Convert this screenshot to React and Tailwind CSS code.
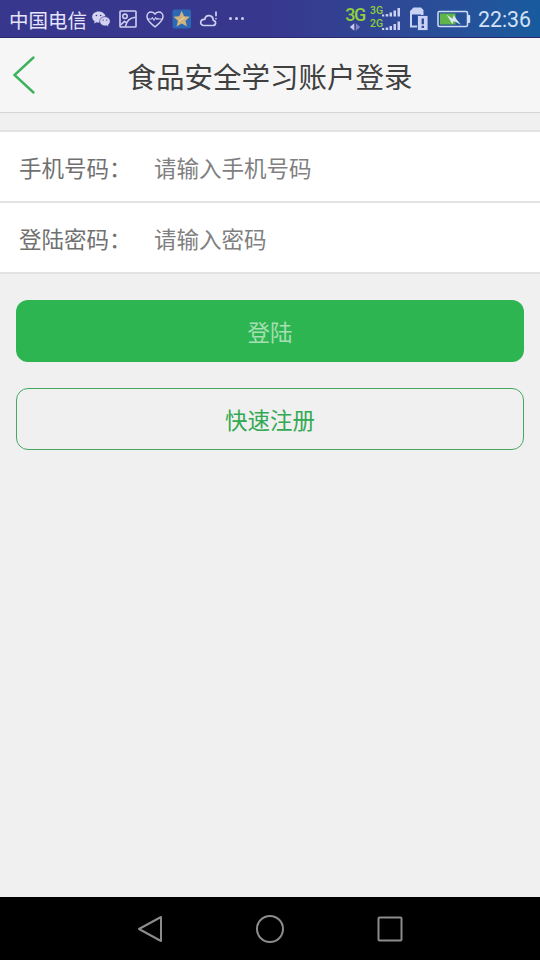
import { useState } from 'react'

const FIELDS = [
  { key: 'phone', label: '手机号码：', hint: '请输入手机号码', type: 'tel' },
  { key: 'password', label: '登陆密码：', hint: '请输入密码', type: 'password' },
]

function WechatIcon() {
  return (
    <svg className="ml-[4px] h-[18px] w-[20px] shrink-0" viewBox="0 0 20 18">
      <path d="M7.700 1.600C4 1.600 1.200 4 1.200 7c0 1.800 1 3.300 2.500 4.300L3 13.600l2.600-1.400c.7.2 1.400.3 2.100.3h1c0-3 2.200-6 6-6C13.800 3.400 10.800 1.600 7.700 1.600z" fill="#d3d2f0" />
      <path d="M19.200 11.300c0-2.500-2.300-4.600-5.200-4.600s-5.300 2.100-5.300 4.600 2.300 4.600 5.300 4.600c.6 0 1.200-.1 1.700-.2l2 1.200-.5-1.900c1.200-.8 2-2.200 2-3.700z" fill="#d3d2f0" stroke="#35358b" strokeWidth=".6" />
      <g fill="#35358b">
        <circle cx="5.400" cy="5.500" r=".8" />
        <circle cx="9.700" cy="5.500" r=".8" />
        <circle cx="12.200" cy="10.100" r=".65" />
        <circle cx="15.700" cy="10.100" r=".65" />
      </g>
    </svg>
  )
}

function PictureIcon() {
  return (
    <svg className="ml-[7.5px] h-[18px] w-[18px] shrink-0" viewBox="0 0 18 18" fill="none" stroke="#cfcff0" strokeWidth="1.6" strokeLinejoin="round">
      <rect x="1" y="1" width="16" height="16" rx=".8" />
      <circle cx="6" cy="6.300" r="2.200" />
      <path d="M1.500 15 5.500 11.300l2.300 1.500M6.500 16.500C7.500 11 11.500 7.600 16.500 7.200" />
    </svg>
  )
}

function HeartIcon() {
  return (
    <svg className="ml-[9px] h-[18px] w-[18px] shrink-0" viewBox="0 0 18 18" fill="none" stroke="#cfcff0" strokeWidth="1.5" strokeLinejoin="round" strokeLinecap="round">
      <path d="M9 16.800C5 13.600 1 10.800 1 6.500 1 3.800 2.900 2 5.200 2 6.900 2 8.300 2.900 9 4.200 9.700 2.900 11.100 2 12.800 2 15.100 2 17 3.800 17 6.500c0 4.300-4 7.100-8 10.300z" />
      <path d="M1.500 9h4l1-1.300 1.500 2.600 1.700-2.800 1.300 2 1-1.200.7.700h3.500" strokeWidth="1.100" />
    </svg>
  )
}

function StarIcon() {
  return (
    <svg className="ml-[8px] h-[20px] w-[20px] shrink-0" viewBox="0 0 20 20">
      <rect x=".5" y=".5" width="18.500" height="19" rx="2" fill="#2d68b5" />
      <path d="m9.700 1.800 2.400 5.500 5.800.5-4.400 3.900 1.400 5.900-5.200-3.100-5.200 3.100 1.400-5.900-4.400-3.900 5.800-.5z" fill="#d0b27c" />
      <path d="m7 12.400 5.500-4" stroke="#e8d9b5" strokeWidth="1" />
    </svg>
  )
}

function CloudIcon() {
  return (
    <svg className="ml-[7px] h-[18px] w-[20px] shrink-0" viewBox="0 0 20 18" fill="none" stroke="#cfcff0" strokeWidth="1.7" strokeLinecap="round" strokeLinejoin="round">
      <path d="M4.500 15.500h9.200c3.600 0 3.800-4.700.6-5C14 4.200 6.500 4 5.800 9.400 1 8.800.2 15.200 4.500 15.500z" />
      <path d="M17 2v3.600M17 8.500v.1" />
    </svg>
  )
}

function SignalIcon() {
  return (
    <svg className="ml-[5px] h-[30px] w-[32px] shrink-0" viewBox="0 0 32 30">
      <g fill="#8fcf3c" fontFamily="Roboto, sans-serif" fontWeight="500" fontSize="10.500">
        <text x="0" y="9.500">3G</text>
        <text x="0" y="23">2G</text>
      </g>
      <g fill="#c9d0f2">
        <path d="M12 10.500h2.200v2H12zM15.700 10h2.500v2.500h-2.500zM19.500 8.500H22v4h-2.500zM23.500 6.500H26v6h-2.500zM27.500 4H30v8.500h-2.500z" />
        <path d="M12 24h2.200v2H12zM15.700 23.500h2.500V26h-2.500zM19.500 22H22v4h-2.500zM23.500 20H26v6h-2.500zM27.500 17.500H30V26h-2.500z" />
      </g>
    </svg>
  )
}

function SimIcon() {
  return (
    <svg className="ml-[7px] h-[26px] w-[20px] shrink-0" viewBox="0 0 20 26">
      <path d="M1 21.500V5l3.500-3.500H12L14.500 4v5h-5v12.500H1z" fill="#c9d2f4" />
      <path d="M3 8.500h9V10H9.500v9.500H3z" fill="#264798" />
      <path d="M8.500 9.500H19v15H8.500z" fill="#c9d2f4" stroke="#264798" strokeWidth=".8" />
      <path d="M12.600 12.500h2.300v5.700h-2.300zM12.600 19.700h2.300v2.200h-2.300z" fill="#264798" />
    </svg>
  )
}

function BatteryIcon() {
  return (
    <svg className="ml-[8px] h-[18px] w-[34px] shrink-0" viewBox="0 0 34 18">
      <rect x="1" y="1.500" width="29.500" height="15" rx="1.500" fill="none" stroke="#d0dcf6" strokeWidth="1.500" />
      <path d="M31 5h1.200c.6 0 1 .4 1 1v6c0 .6-.4 1-1 1H31z" fill="#d0dcf6" />
      <path d="M3 3.500h15.500v11H3z" fill="#5fb548" />
      <path d="m9.500 4.500 6 4.200 1.200-3.800 3.300 5 4 4.800-7.200-3.800-1.500 3.200z" fill="#d6e6f2" />
    </svg>
  )
}

function StatusBar() {
  return (
    <div className="flex h-[38px] shrink-0 items-center border-b border-[#29286c] bg-linear-to-r from-[#37378e] from-50% to-[#175b9e] pl-[9px]">
      <span className="w-[78px] pt-[2px] whitespace-nowrap text-[19.5px] leading-[36px] text-[#e6e5fb]">中国电信</span>
      <WechatIcon />
      <PictureIcon />
      <HeartIcon />
      <StarIcon />
      <CloudIcon />
      <div className="ml-[10px] flex gap-[3px]">
        <span className="size-[3px] rounded-full bg-[#cfcff0]" />
        <span className="size-[3px] rounded-full bg-[#cfcff0]" />
        <span className="size-[3px] rounded-full bg-[#cfcff0]" />
      </div>
      <div className="ml-auto flex items-center pr-[9px]">
        <div className="flex w-[20px] flex-col items-center">
          <span className="font-[Roboto] text-[18px] leading-[17px] font-medium tracking-[-1.5px] text-[#8fcf3c]">3G</span>
          <svg className="h-[8px] w-[12px]" viewBox="0 0 12 8">
            <path d="M5.300.3v7.400L.8 4z" fill="#c9c9f0" />
            <path d="M6.900.3v7.400L11.200 4z" fill="#7f83c4" />
          </svg>
        </div>
        <SignalIcon />
        <SimIcon />
        <BatteryIcon />
        <span className="ml-[7px] w-[53px] pt-[2px] whitespace-nowrap font-[Roboto] text-[21.3px] leading-[36px] text-[#d3e2f7]">22:36</span>
      </div>
    </div>
  )
}

export default function App() {
  const [form, setForm] = useState({ phone: '', password: '' })

  return (
    <div className="flex h-[960px] w-[540px] flex-col overflow-hidden bg-[#f0f0f0] font-['Noto_Sans_CJK_SC',sans-serif]">
      <StatusBar />

      <header className="grid h-[75px] shrink-0 grid-cols-[60px_1fr_60px] items-center border-b border-[#d5d5d5] bg-[#f6f6f6]">
        <button className="pl-[12px]">
          <svg className="h-[40px] w-[24px]" viewBox="0 0 24 40" fill="none" stroke="#3db25c" strokeWidth="2.4" strokeLinecap="round">
            <path d="M21.500 2.500 2.500 20l19 17.500" />
          </svg>
        </button>
        <h1 className="pt-[2px] text-center text-[28.5px] leading-[40px] whitespace-nowrap text-[#404040]">食品安全学习账户登录</h1>
      </header>

      <form className="mt-[17px] shrink-0 border-t-2 border-[#e2e2e2] bg-white">
        {FIELDS.map(({ key, label, hint, type }) => (
          <label key={key} className="flex h-[71px] items-center border-b-2 border-[#e2e2e2] pt-[2px] pl-[19px] text-[22.5px] text-[#707070]">
            <span className="w-[135px] shrink-0 whitespace-nowrap">{label}</span>
            <input
              className="min-w-0 flex-1 outline-none placeholder:text-[#808080]"
              type={type}
              value={form[key]}
              onChange={(e) => setForm({ ...form, [key]: e.target.value })}
              placeholder={hint}
            />
          </label>
        ))}
      </form>

      <div className="mt-[26px] flex flex-col gap-[26px] px-4 text-[22.5px]">
        <button className="h-[62px] rounded-[12px] bg-[#2db551] pt-[2px] text-[#a5dfb2]">登陆</button>
        <button className="h-[62px] rounded-[12px] border border-[#45a963] pt-[2px] text-[#33a953]">快速注册</button>
      </div>

      <nav className="mt-auto flex h-[63px] shrink-0 items-center justify-center gap-[90px] bg-black">
        <svg className="size-[30px]" viewBox="0 0 30 30" fill="none" stroke="#8c8c8c" strokeWidth="2" strokeLinejoin="round">
          <path d="M26 3v24L4 15z" />
        </svg>
        <svg className="size-[30px]" viewBox="0 0 30 30" fill="none" stroke="#8c8c8c" strokeWidth="2">
          <circle cx="15" cy="15" r="13" />
        </svg>
        <svg className="size-[30px]" viewBox="0 0 30 30" fill="none" stroke="#8c8c8c" strokeWidth="2">
          <rect x="3.500" y="3.500" width="23" height="23" rx="1" />
        </svg>
      </nav>
    </div>
  )
}
